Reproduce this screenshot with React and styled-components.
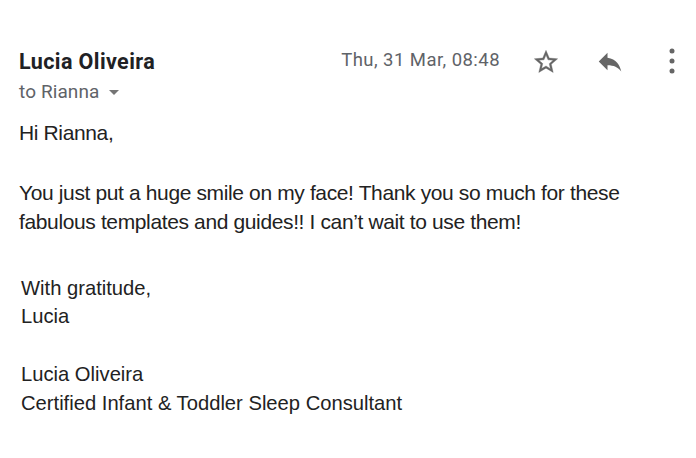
import * as React from "react"
import styled, { createGlobalStyle } from "styled-components"

const Global = createGlobalStyle`
    html, body {
        margin: 0;
        padding: 0;
        background: #ffffff;
    }
`

const Page = styled.div`
    width: 696px;
    height: 458px;
    box-sizing: border-box;
    padding: 48px 0 0 19px;
    background: #fff;
    overflow: hidden;
`

const Header = styled.div`
    display: flex;
    align-items: flex-start;
    justify-content: space-between;
`

const Sender = styled.div`
    display: flex;
    flex-direction: column;
    font-family: Roboto, "Liberation Sans", sans-serif;
`

const Name = styled.div`
    font-size: 21.5px;
    font-weight: 700;
    letter-spacing: 0.4px;
    color: #202124;
    line-height: 28px;
`

const Recipient = styled.div`
    display: flex;
    align-items: center;
    gap: 10px;
    font-size: 19px;
    letter-spacing: 0.1px;
    color: #5f6368;
    line-height: 24px;
    margin-top: 4px;
`

const Caret = styled.span`
    width: 0;
    height: 0;
    border-left: 5.5px solid transparent;
    border-right: 5.5px solid transparent;
    border-top: 5px solid #757575;
    margin-top: 1px;
`

const Meta = styled.div`
    display: flex;
    align-items: center;
    height: 28px;
    font-family: Roboto, "Liberation Sans", sans-serif;
`

const Date = styled.span`
    font-size: 18.5px;
    letter-spacing: 0.45px;
    line-height: 24px;
    margin-bottom: 4px;
    color: #5f6368;
    margin-right: 32px;
`

const IconButton = styled.span`
    display: flex;
    align-items: center;
    justify-content: center;
    width: ${p => p.w}px;
    height: 28px;
    margin-right: ${p => p.gap}px;
    margin-top: ${p => p.up ? -3 : 0}px;
    color: #666;
`

const Body = styled.div`
    margin-top: 14px;
    font-family: "Liberation Sans", Arial, sans-serif;
    color: #222;
`

const Para = styled.p`
    margin: 0 0 ${p => p.after}px ${p => p.indent || 0}px;
    font-size: ${p => p.size}px;
    line-height: ${p => p.lh}px;
    letter-spacing: ${p => p.ls || 0}px;
`

const Star = () => (
    <svg width="32" height="32" viewBox="0 0 24 24">
        <path
            fill="currentColor"
            stroke="currentColor"
            strokeWidth="0.3"
            d="M22 9.24l-7.19-.62L12 2 9.19 8.63 2 9.24l5.46 4.73L5.82 21 12 17.27 18.18 21l-1.63-7.03L22 9.24zM12 15.4l-3.76 2.27 1-4.28-3.32-2.88 4.38-.38L12 6.1l1.71 4.04 4.38.38-3.32 2.88 1 4.28L12 15.4z"
        />
    </svg>
)

const Reply = () => (
    <svg width="31" height="28" viewBox="0 1.5 24 21.7">
        <path fill="currentColor" d="M10 9V5l-7 7 7 7v-4.1c5 0 8.5 1.6 11 5.1-1-5-4-10-11-11z" />
    </svg>
)

const Dots = () => (
    <svg width="6" height="26" viewBox="0 0 6 26">
        <circle cx="3" cy="3" r="2.5" fill="currentColor" />
        <circle cx="3" cy="13" r="2.5" fill="currentColor" />
        <circle cx="3" cy="23" r="2.5" fill="currentColor" />
    </svg>
)

export default function App() {
    return (
        <Page>
            <Global />
            <Header>
                <Sender>
                    <Name>Lucia Oliveira</Name>
                    <Recipient>
                        to Rianna <Caret />
                    </Recipient>
                </Sender>
                <Meta>
                    <Date>Thu, 31 Mar, 08:48</Date>
                    <IconButton w={28} gap={35}><Star /></IconButton>
                    <IconButton w={30} gap={44}><Reply /></IconButton>
                    <IconButton w={6} gap={21} up><Dots /></IconButton>
                </Meta>
            </Header>
            <Body>
                <Para size={21} lh={29} after={30.5} ls={-0.37}>Hi Rianna,</Para>
                <Para size={21} lh={29} after={38.3} ls={-0.37}>
                    You just put a huge smile on my face! Thank you so much for these
                    <br />
                    fabulous templates and guides!! I can’t wait to use them!
                </Para>
                <Para size={20.2} lh={28.5} after={29.6} indent={2}>
                    With gratitude,
                    <br />
                    Lucia
                </Para>
                <Para size={20.2} lh={28.5} after={0} indent={2}>
                    Lucia Oliveira
                    <br />
                    Certified Infant &amp; Toddler Sleep Consultant
                </Para>
            </Body>
        </Page>
    )
}
